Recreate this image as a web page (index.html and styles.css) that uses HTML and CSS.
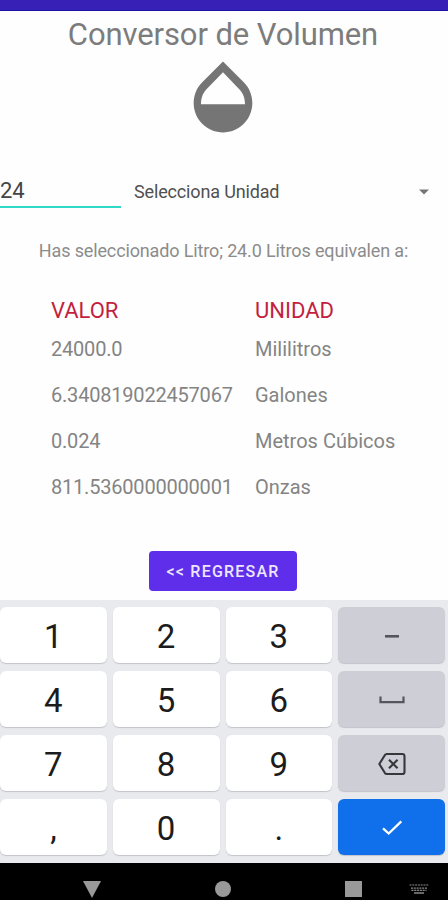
FILE: index.html
```html
<!DOCTYPE html>
<html lang="es">
<head>
  <meta charset="UTF-8">
  <meta name="viewport" content="width=device-width, initial-scale=1.0">
  <title>Conversor de Volumen</title>
  <link rel="stylesheet" href="styles.css">
</head>
<body>

<div class="status-bar"></div>

<main class="content">
  <h1>Conversor de Volumen</h1>
  <svg class="drop" viewBox="0 0 24 24" fill="#757575">
    <path d="M17.66 8L12 2.35 6.34 8C4.78 9.56 4 11.64 4 13.64s.78 4.11 2.34 5.67 3.61 2.35 5.66 2.35 4.1-.79 5.66-2.35S20 15.64 20 13.64 19.22 9.56 17.66 8zM6 14c.01-2 .62-3.27 1.76-4.4L12 5.27l4.24 4.38C17.38 10.77 17.99 12 18 14H6z"/>
  </svg>

  <div class="form-row">
    <div class="amount">24</div>
    <div class="select">
      <span>Selecciona Unidad</span>
      <svg width="10" height="6" viewBox="0 0 10 6" fill="#757575"><path d="M0 0.5h10l-5 5z"/></svg>
    </div>
  </div>

  <p class="message">Has seleccionado Litro; 24.0 Litros equivalen a:</p>

  <div class="results">
    <div class="head value">VALOR</div>
    <div class="head unit">UNIDAD</div>
    <div class="value">24000.0</div>
    <div class="unit">Mililitros</div>
    <div class="value">6.340819022457067</div>
    <div class="unit">Galones</div>
    <div class="value">0.024</div>
    <div class="unit">Metros Cúbicos</div>
    <div class="value">811.5360000000001</div>
    <div class="unit">Onzas</div>
  </div>

  <button class="back">&lt;&lt; REGRESAR</button>
</main>

<div class="keyboard">
  <div class="key">1</div>
  <div class="key">2</div>
  <div class="key">3</div>
  <div class="key gray">
    <svg width="30" height="24" viewBox="0 0 30 24"><path d="M8 12.3h14" stroke="#55565b" stroke-width="2.6"/></svg>
  </div>
  <div class="key">4</div>
  <div class="key">5</div>
  <div class="key">6</div>
  <div class="key gray">
    <svg width="30" height="24" viewBox="0 0 30 24" fill="none"><path d="M3.5 8.5v5.7h23V8.5" stroke="#55565b" stroke-width="2.2"/></svg>
  </div>
  <div class="key">7</div>
  <div class="key">8</div>
  <div class="key">9</div>
  <div class="key gray">
    <svg width="30" height="24" viewBox="0 0 30 24" fill="none" stroke="#36373b" stroke-width="2.1">
      <path d="M9.8 2h15.4q2.3 0 2.3 2.3v15.4q0 2.3-2.3 2.3H9.8q-1.2 0-2-1.2L2.3 12l5.5-8.8q.8-1.2 2-1.2z" stroke-linejoin="round"/>
      <path d="M12 7.7l8.6 8.6M20.6 7.7L12 16.3"/>
    </svg>
  </div>
  <div class="key">,</div>
  <div class="key">0</div>
  <div class="key">.</div>
  <div class="key blue">
    <svg width="30" height="24" viewBox="0 0 30 24" fill="none"><path d="M6 12.3l5.7 5.2L24.3 5.3" stroke="#fff" stroke-width="2.3"/></svg>
  </div>
</div>

<div class="nav-bar">
  <svg class="nav-back" width="18" height="17" viewBox="0 0 18 17"><path d="M0 0h18L9 17z"/></svg>
  <svg class="nav-home" width="16" height="16" viewBox="0 0 16 16"><circle cx="8" cy="8" r="8"/></svg>
  <svg class="nav-recent" width="17" height="16" viewBox="0 0 17 16"><path d="M0 0h17v16H0z"/></svg>
  <svg class="nav-keyboard" width="20" height="10" viewBox="0 0 20 10" fill="none" stroke="#8a8a8a">
    <path d="M.5 1h19M2 4.2h16M2.5 6.3h15" stroke-width="1.2" stroke-dasharray="2 .8"/>
    <path d="M5 9h10" stroke-width="1.5"/>
  </svg>
</div>

</body>
</html>
```
FILE: styles.css
```css
* {
  box-sizing: border-box;
}
body {
  font-family: Roboto, "Liberation Sans", sans-serif;
  background-color: #fefefe;
  margin: 0;
  color: #757575;
  width: 448px;
  height: 900px;
  overflow: hidden;
  display: flex;
  flex-direction: column;
}
.status-bar {
  height: 11px;
  background-color: #3620b5;
  border-bottom: 1px solid #1a14a8;
}
.content {
  height: 589px;
  display: flex;
  flex-direction: column;
  align-items: center;
}
h1 {
  margin: 3px 2px 0 0;
  font-size: 31px;
  font-weight: 400;
  line-height: 41px;
  letter-spacing: -0.1px;
  color: #7c7c7c;
  white-space: nowrap;
}
.drop {
  width: 88px;
  height: 88px;
  margin: -2px 2px 0 0;
  flex: none;
}
.form-row {
  width: 100%;
  height: 36px;
  margin-top: 31px;
  display: flex;
}
.amount {
  width: 121px;
  border-bottom: 2px solid #2fd9c8;
  color: #444;
  font-size: 22px;
  line-height: 37px;
}
.select {
  flex: 1;
  display: flex;
  justify-content: space-between;
  align-items: center;
  padding: 3px 19px 0 13px;
  color: #505050;
  font-size: 18px;
  letter-spacing: -0.15px;
}
.message {
  margin: 31px 1px 0 0;
  font-size: 18px;
  line-height: 24px;
  letter-spacing: -0.14px;
  color: #8c8c8c;
  white-space: nowrap;
}
.results {
  width: 100%;
  margin-top: 34px;
  padding-left: 51px;
  display: grid;
  grid-template-columns: 204px 1fr;
  grid-template-rows: 28px repeat(4, 46px);
  font-size: 20px;
  line-height: 48px;
  color: #848484;
}
.results .value {
  letter-spacing: -0.2px;
}
.results .head {
  font-size: 22px;
  line-height: 28px;
  letter-spacing: 0;
  color: #c31f3f;
}
.back {
  width: 148px;
  height: 40px;
  margin: 42px 2px 0 0;
  padding: 0;
  flex: none;
  border: none;
  border-radius: 4px;
  background-color: #5f2eea;
  color: #eee6ff;
  font-family: inherit;
  font-size: 16px;
  font-weight: 500;
  letter-spacing: 1.2px;
}
.keyboard {
  height: 263px;
  padding: 7px 3px 8px 0;
  background-color: #e8eaed;
  display: grid;
  grid-template-columns: repeat(4, 1fr);
  grid-template-rows: repeat(4, 56px);
  column-gap: 6px;
  row-gap: 8px;
}
.key {
  display: flex;
  justify-content: center;
  align-items: center;
  padding-top: 3px;
  border-radius: 6px;
  background-color: #fff;
  box-shadow: 0 1px 1px #c2c4c8;
  color: #1c1c1c;
  font-size: 33px;
  line-height: 40px;
}
.key.gray {
  padding-top: 2px;
  background-color: #cdced6;
}
.key.blue {
  padding-top: 2px;
  background-color: #1070eb;
}
.nav-bar {
  height: 37px;
  background-color: #000;
  fill: #999;
  display: flex;
  align-items: center;
  padding: 15px 19px 0 83px;
}
.nav-home {
  margin-left: 114px;
}
.nav-recent {
  margin-left: 114px;
}
.nav-keyboard {
  margin-left: auto;
}
```
